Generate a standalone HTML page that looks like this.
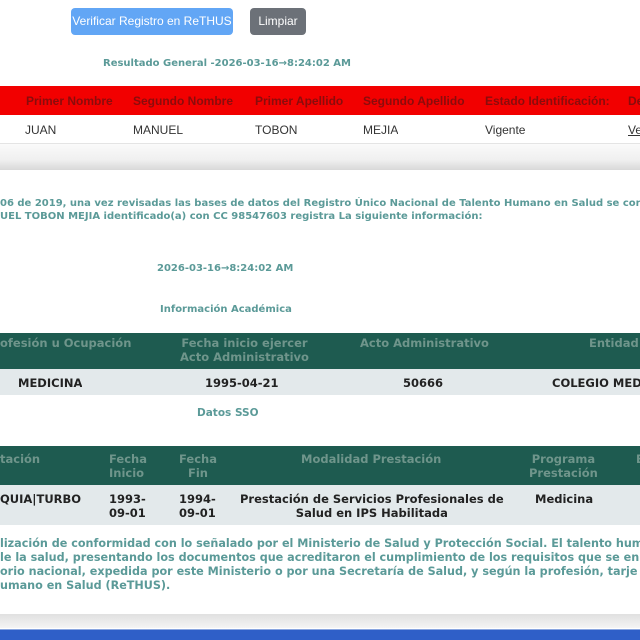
<!DOCTYPE html>
<html><head><meta charset="utf-8"><style>
*{margin:0;padding:0;box-sizing:border-box}
body{width:640px;height:640px;overflow:hidden;background:#fff;position:relative;font-family:"DejaVu Sans",Verdana,sans-serif}
.a{position:absolute;white-space:nowrap;overflow:hidden}
.t{color:#5b9a98;font-weight:bold;font-size:10px}
.sans{font-family:"Liberation Sans",Arial,sans-serif}
.rh{color:#8a0c0c;font-weight:bold;font-size:12px;font-family:"Liberation Sans",Arial,sans-serif}
.rd{color:#333;font-size:12px;font-family:"Liberation Sans",Arial,sans-serif}
.gh{color:#6f958b;font-weight:bold;font-size:11.5px;line-height:14px}
.gd{color:#222;font-weight:bold;font-size:11.5px;line-height:14px}
</style></head><body>
<div class="a sans" style="left:71px;top:8px;width:162px;height:27px;background:#62a6f5;border-radius:4px;color:#fff;font-size:12px;line-height:27px;text-align:center">Verificar Registro en ReTHUS</div>
<div class="a sans" style="left:250px;top:8px;width:56px;height:27px;background:#6c7178;border-radius:4px;color:#fff;font-size:12px;line-height:27px;text-align:center">Limpiar</div>
<div class="a t" style="left:103px;top:58px">Resultado General -2026-03-16→8:24:02 AM</div>
<div class="a" style="left:0;top:86px;width:640px;height:29px;background:#f20000"></div>
<div class="a rh" style="left:26px;top:94px">Primer Nombre</div>
<div class="a rh" style="left:133px;top:94px">Segundo Nombre</div>
<div class="a rh" style="left:255px;top:94px">Primer Apellido</div>
<div class="a rh" style="left:363px;top:94px">Segundo Apellido</div>
<div class="a rh" style="left:485px;top:94px">Estado Identificación:</div>
<div class="a rh" style="left:628px;top:94px;width:12px">De</div>
<div class="a" style="left:0;top:143px;width:640px;height:1px;background:#e4e4e4"></div>
<div class="a rd" style="left:25px;top:123px">JUAN</div>
<div class="a rd" style="left:133px;top:123px">MANUEL</div>
<div class="a rd" style="left:255px;top:123px">TOBON</div>
<div class="a rd" style="left:363px;top:123px">MEJIA</div>
<div class="a rd" style="left:485px;top:123px">Vigente</div>
<div class="a rd" style="left:628px;top:123px;width:12px;text-decoration:underline">Ve</div>
<div class="a" style="left:0;top:144px;width:640px;height:26px;background:linear-gradient(#fafafa,#f0f0f0 60%,#d8d8d8)"></div>
<div class="a t" style="left:0;top:197px;width:640px;line-height:13px">06 de 2019, una vez revisadas las bases de datos del Registro Único Nacional de Talento Humano en Salud se constat<br>UEL TOBON MEJIA identificado(a) con CC 98547603 registra La siguiente información:</div>
<div class="a t" style="left:157px;top:263px">2026-03-16→8:24:02 AM</div>
<div class="a t" style="left:160px;top:304px">Información Académica</div>
<div class="a" style="left:0;top:333px;width:640px;height:36px;background:#1e5b50"></div>
<div class="a gh" style="left:0;top:336px">ofesión u Ocupación</div>
<div class="a gh" style="left:180px;top:336px;text-align:center">Fecha inicio ejercer<br>Acto Administrativo</div>
<div class="a gh" style="left:360px;top:336px">Acto Administrativo</div>
<div class="a gh" style="left:589px;top:336px;width:51px">Entidad</div>
<div class="a" style="left:0;top:369px;width:640px;height:26px;background:#e3e9eb"></div>
<div class="a gd" style="left:18px;top:376px">MEDICINA</div>
<div class="a gd" style="left:205px;top:376px">1995-04-21</div>
<div class="a gd" style="left:403px;top:376px">50666</div>
<div class="a gd" style="left:552px;top:376px;width:88px">COLEGIO MED</div>
<div class="a t" style="left:197px;top:407px;font-size:10.5px">Datos SSO</div>
<div class="a" style="left:0;top:446px;width:640px;height:39px;background:#1e5b50"></div>
<div class="a gh" style="left:0;top:452px">tación</div>
<div class="a gh" style="left:109px;top:452px">Fecha<br>Inicio</div>
<div class="a gh" style="left:179px;top:452px;text-align:center">Fecha<br>Fin</div>
<div class="a gh" style="left:301px;top:452px">Modalidad Prestación</div>
<div class="a gh" style="left:529px;top:452px;text-align:center">Programa<br>Prestación</div>
<div class="a gh" style="left:636px;top:452px;width:4px">E</div>
<div class="a" style="left:0;top:485px;width:640px;height:40px;background:#e3e9eb"></div>
<div class="a gd" style="left:0;top:492px">QUIA|TURBO</div>
<div class="a gd" style="left:109px;top:492px">1993-<br>09-01</div>
<div class="a gd" style="left:179px;top:492px">1994-<br>09-01</div>
<div class="a gd" style="left:240px;top:492px;text-align:center">Prestación de Servicios Profesionales de<br>Salud en IPS Habilitada</div>
<div class="a gd" style="left:535px;top:492px">Medicina</div>
<div class="a t" style="left:0;top:537px;width:640px;line-height:14px;font-size:11.2px">lización de conformidad con lo señalado por el Ministerio de Salud y Protección Social. El talento hum<br>le la salud, presentando los documentos que acreditaron el cumplimiento de los requisitos que se en<br>orio nacional, expedida por este Ministerio o por una Secretaría de Salud, y según la profesión, tarje<br>umano en Salud (ReTHUS).</div>
<div class="a" style="left:0;top:614px;width:640px;height:14px;background:linear-gradient(#e0e0e0,#f4f4f4)"></div>
<div class="a" style="left:0;top:629px;width:640px;height:11px;background:#2f5fc8;border-top:1px solid #8aa6e0"></div>
</body></html>
